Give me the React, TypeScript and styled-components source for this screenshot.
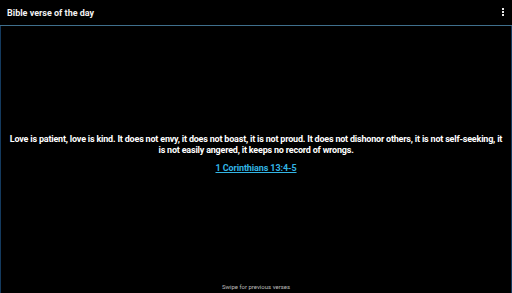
import React from "react";
import styled, { createGlobalStyle } from "styled-components";

const Global = createGlobalStyle`
  html, body { margin: 0; padding: 0; background: #000; }
  body { font-family: Roboto, "Liberation Sans", sans-serif; }
`;

const Screen = styled.div`
  width: 512px;
  height: 293px;
  display: flex;
  flex-direction: column;
  background: #000;
  overflow: hidden;
`;

const ActionBar = styled.header`
  flex: none;
  display: flex;
  align-items: center;
  justify-content: space-between;
  padding: 0 8px 0 7px;
  border-bottom: 1px solid #3f6f8c;
  box-sizing: border-box;
  height: 26px;
`;

const Title = styled.h1`
  margin: 0;
  font-size: 9px;
  font-weight: 700;
  color: #f2f2f2;
`;

const MenuButton = styled.div`
  display: flex;
  flex-direction: column;
  gap: 1px;
  align-items: center;
  margin-top: -2px;
`;

const Dot = styled.span`
  width: 2px;
  height: 2px;
  background: #eaeaea;
`;

const Body = styled.main`
  flex: 1;
  display: flex;
  flex-direction: column;
  border-left: 1px solid #143a5e;
  border-right: 1px solid #143a5e;
`;

const Content = styled.section`
  flex: 1;
  display: flex;
  flex-direction: column;
  justify-content: center;
  align-items: center;
  padding: 2px 7px 0;
`;

const Verse = styled.p`
  margin: 0;
  font-size: 9px;
  line-height: 11px;
  font-weight: 700;
  letter-spacing: -0.2px;
  color: #ffffff;
  text-align: center;
`;

const Reference = styled.a`
  margin-top: 6px;
  font-size: 9px;
  line-height: 12px;
  font-weight: 700;
  letter-spacing: -0.1px;
  color: #33b5e5;
  text-decoration: underline;
`;

const Footer = styled.footer`
  height: 14px;
  flex: none;
  display: flex;
  align-items: center;
  justify-content: center;
  font-size: 6px;
  line-height: 7px;
  color: #bdbdbd;
`;

export default function App() {
  return (
    <>
      <Global />
      <Screen>
        <ActionBar>
          <Title>Bible verse of the day</Title>
          <MenuButton>
            <Dot />
            <Dot />
            <Dot />
          </MenuButton>
        </ActionBar>
        <Body>
          <Content>
            <Verse>
              Love is patient, love is kind. It does not envy, it does not boast, it is not proud. It does not dishonor
              others, it is not self-seeking, it is not easily angered, it keeps no record of wrongs.
            </Verse>
            <Reference>1 Corinthians 13:4-5</Reference>
          </Content>
          <Footer>Swipe for previous verses</Footer>
        </Body>
      </Screen>
    </>
  );
}
